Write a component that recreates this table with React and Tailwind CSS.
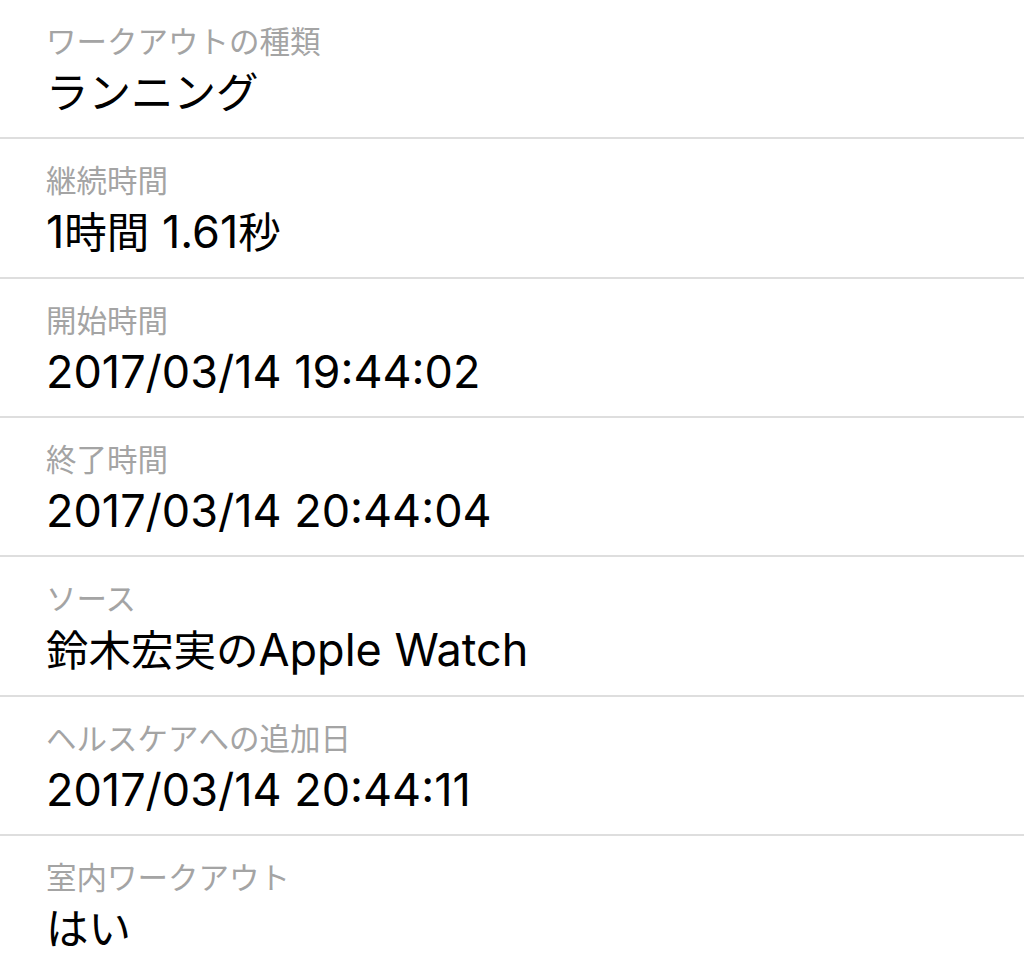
// Workout detail list (Health app style)
const rows = [
  { label: "ワークアウトの種類", value: [["ja", "ランニング"]], h: "h-[139px]" },
  {
    label: "継続時間",
    value: [["en", "1"], ["ja", "時間"], ["en", " 1.61"], ["ja", "秒"]],
    h: "h-[140px]",
  },
  { label: "開始時間", value: [["en", "2017/03/14 19:44:02"]], h: "h-[139px]" },
  { label: "終了時間", value: [["en", "2017/03/14 20:44:04"]], h: "h-[139px]" },
  { label: "ソース", value: [["ja", "鈴木宏実の"], ["en", "Apple Watch"]], h: "h-[140px]" },
  { label: "ヘルスケアへの追加日", value: [["en", "2017/03/14 20:44:11"]], h: "h-[139px]" },
  { label: "室内ワークアウト", value: [["ja", "はい"]], h: "h-[139px]", last: true },
];

function Value({ parts }) {
  return (
    <div className="leading-[52px] text-black whitespace-nowrap">
      {parts.map(([kind, text], i) =>
        kind === "ja" ? (
          <span key={i} className="text-[42.5px]">{text}</span>
        ) : (
          <span key={i} className="text-[45px]">{text}</span>
        )
      )}
    </div>
  );
}

export default function App() {
  return (
    <div
      className="w-[1024px] h-[973px] overflow-hidden bg-white"
      style={{ fontFamily: 'Inter, "Noto Sans CJK JP", sans-serif' }}
    >
      {rows.map((r) => (
        <div
          key={r.label}
          className={`${r.h} pl-[46px] pt-[23px] flex flex-col gap-[7px] ${
            r.last ? "" : "border-b-2 border-[#dedede]"
          }`}
        >
          <div className="text-[30.5px] leading-[37px] text-[#a4a4a4] whitespace-nowrap">{r.label}</div>
          <Value parts={r.value} />
        </div>
      ))}
    </div>
  );
}
